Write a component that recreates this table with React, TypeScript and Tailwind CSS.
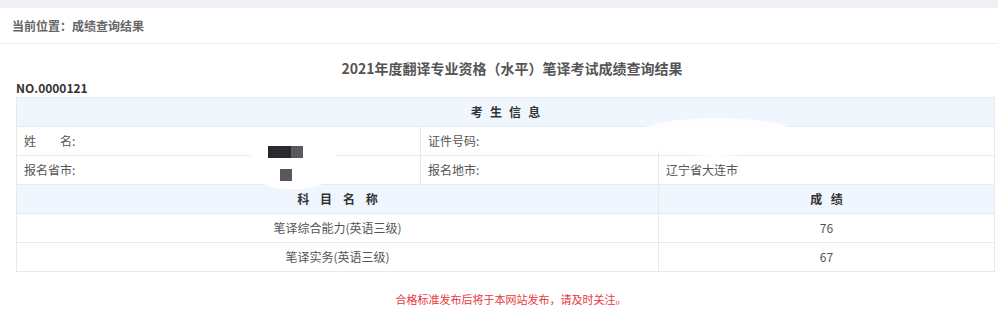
export default function App() {
  const font = { fontFamily: '"Microsoft YaHei", "Noto Sans CJK SC", "Liberation Sans", sans-serif' };
  const cell = "border border-[#e6e9ee] h-[29px] px-[7px] text-[12px] text-[#555]";
  const head = "border border-[#e6e9ee] h-[29px] bg-[#eff6fd] text-center text-[12px] font-bold text-[#333]";

  return (
    <div className="w-[998px] h-[317px] bg-white overflow-hidden relative" style={font}>
      <div className="h-[8px] bg-[#eef0f3]" />
      <div className="h-[36px] border-b border-[#eef0f3] flex items-center pl-[12px] text-[12px] font-bold text-[#666]">
        当前位置：成绩查询结果
      </div>

      <div className="pl-[16px] pr-[4px]">
        <div className="text-center text-[14px] font-bold text-[#555] pt-[14px] pl-[14px] leading-[20px]">
          2021年度翻译专业资格（水平）笔译考试成绩查询结果
        </div>
        <div className="text-[12px] font-bold text-[#333] leading-[16px] pt-[2px] pb-[1px]">NO.0000121</div>

        <table className="w-[978px] border-collapse table-fixed">
          <colgroup>
            <col className="w-[404px]" />
            <col className="w-[238px]" />
            <col className="w-[336px]" />
          </colgroup>
          <tbody>
            <tr>
              <td colSpan={3} className={head}>
                <span className="tracking-[0.6em] pl-[0.6em]">考生信息</span>
              </td>
            </tr>
            <tr>
              <td className={cell}>
                姓<span className="inline-block w-[24px]" />名:
              </td>
              <td className={cell}>证件号码:</td>
              <td className={cell} />
            </tr>
            <tr>
              <td className={cell}>报名省市:</td>
              <td className={cell}>报名地市:</td>
              <td className={cell}>辽宁省大连市</td>
            </tr>
            <tr>
              <td colSpan={2} className={head}>
                <span className="tracking-[0.9em] pl-[0.9em]">科目名称</span>
              </td>
              <td className={head}>
                <span className="tracking-[0.7em] pl-[0.7em]">成绩</span>
              </td>
            </tr>
            <tr>
              <td colSpan={2} className={cell + " text-center"}>笔译综合能力(英语三级)</td>
              <td className={cell + " text-center"}>76</td>
            </tr>
            <tr>
              <td colSpan={2} className={cell + " text-center"}>笔译实务(英语三级)</td>
              <td className={cell + " text-center"}>67</td>
            </tr>
          </tbody>
        </table>

        <div className="text-center text-[11px] text-[#e8363b] pt-[19px] pl-[12px]">
          合格标准发布后将于本网站发布，请及时关注。
        </div>
      </div>

      {/* redaction marks */}
      <div className="absolute left-[250px] top-[127px] w-[86px] h-[62px] rounded-[40%] bg-white/95" />
      <div className="absolute left-[632px] top-[118px] w-[170px] h-[38px] rounded-[50%] bg-white/90" />
      <div className="absolute left-[268px] top-[146px] w-[23px] h-[12px] bg-[#2a2a2e]" />
      <div className="absolute left-[291px] top-[146px] w-[12px] h-[12px] bg-[#58585e]" />
      <div className="absolute left-[280px] top-[169px] w-[12px] h-[12px] bg-[#58585e]" />
    </div>
  );
}
